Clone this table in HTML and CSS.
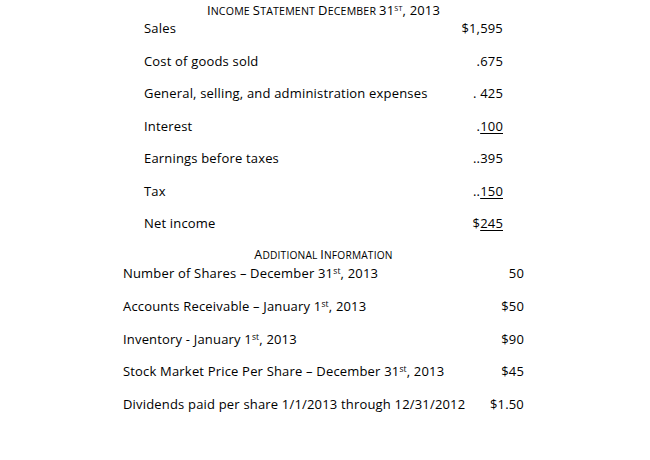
FILE: index.html
```html
<!DOCTYPE html>
<html>
<head>
<meta charset="utf-8">
<link rel="stylesheet" href="styles.css">
</head>
<body>
<div class="page">
  <section class="income">
    <h1 class="heading title"><span class="big">I</span>ncome <span class="big">S</span>tatement <span class="big">D</span>ecember <span class="big">31<sup>st</sup>, 2013</span></h1>
    <div class="row first"><span>Sales</span><span>$1,595</span></div>
    <div class="row"><span>Cost of goods sold</span><span>.675</span></div>
    <div class="row"><span>General, selling, and administration expenses</span><span>. 425</span></div>
    <div class="row"><span>Interest</span><span>.<u>100</u></span></div>
    <div class="row"><span>Earnings before taxes</span><span>..395</span></div>
    <div class="row"><span>Tax</span><span>..<u>150</u></span></div>
    <div class="row"><span>Net income</span><span>$<u>245</u></span></div>
  </section>
  <section class="additional">
    <h2 class="heading sub"><span class="big">A</span>dditional <span class="big">I</span>nformation</h2>
    <div class="row first"><span>Number of Shares – December 31<sup>st</sup>, 2013</span><span>50</span></div>
    <div class="row"><span>Accounts Receivable – January 1<sup>st</sup>, 2013</span><span>$50</span></div>
    <div class="row"><span>Inventory - January 1<sup>st</sup>, 2013</span><span>$90</span></div>
    <div class="row"><span>Stock Market Price Per Share – December 31<sup>st</sup>, 2013</span><span>$45</span></div>
    <div class="row"><span>Dividends paid per share 1/1/2013 through 12/31/2012</span><span>$1.50</span></div>
  </section>
</div>
</body>
</html>
```
FILE: styles.css
```css
html, body {
  margin: 0;
  padding: 0;
  background: #fff;
}
body {
  font-family: "Open Sans", "Noto Sans", sans-serif;
  font-size: 13px;
  letter-spacing: 0.18px;
  color: #000;
}
.page {
  width: 650px;
  height: 460px;
  padding-top: 2px;
  box-sizing: border-box;
}
.income {
  margin-left: 144px;
  width: 359px;
}
.additional {
  margin-left: 123px;
  width: 401px;
}
.heading {
  margin: 0;
  font-weight: normal;
  text-transform: uppercase;
  text-align: center;
  line-height: 16px;
}
.title {
  font-size: 10.6px;
  height: 16px;
}
.title .big {
  font-size: 13px;
}
.sub {
  font-size: 10.2px;
  height: 16px;
  margin-top: 2px;
}
.sub .big {
  font-size: 12.5px;
}
.heading sup {
  text-transform: uppercase;
  font-size: 0.55em;
}
.row {
  display: flex;
  justify-content: space-between;
  height: 32.4px;
  line-height: 20px;
}
.first {
  height: 33px;
}
sup {
  font-size: 0.65em;
  line-height: 0;
  vertical-align: 0.5em;
}
u {
  text-decoration-thickness: 1px;
  text-underline-offset: 2px;
}
```
